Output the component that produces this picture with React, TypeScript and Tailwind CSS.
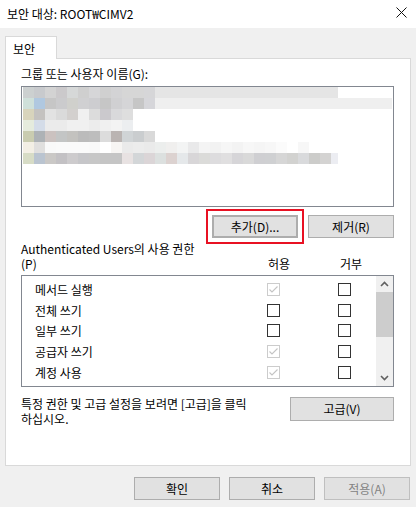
import React from "react";

const rows: { cells: string[]; tail?: string; tailW?: number }[] = [
  {
    cells: ["#ccd0d0", "#c8cacd", "#d3d3d3", "#cbc9cb", "#d6d8d8", "#cfcfcf", "#d6d6d8", "#d0d0d0", "#d3d3d5", "#d6d6d6", "#d6d6d6", "#d6d6d8"],
    tail: "#e5e5e5",
    tailW: 183,
  },
  {
    cells: ["#cfe0da", "#b0c8e0", "#c6c6c6", "#cbcbcd", "#d0d0cc", "#d0d0d2", "#cdcdd0", "#c6c6c6", "#d0d0d2", "#d5d5d7", "#c6c6c6", "#d6d6da"],
    tail: "#efefef",
    tailW: 237,
  },
  {
    cells: ["#d8d4bc", "#c4c2c0", "#e2e2e2", "#dadada", "#d3d0ce", "#f0f0f0", "#dcdcdc", "#cbc9cd", "#d9d9db", "#dedede"],
  },
  {
    cells: ["#e5ebdd", "#d4dce8", "#ebebeb", "#ebebeb", "#f0f0f0", "#f0f0f0", "#ececec", "#f0f0f0", "#f3f3f3", "#eceef0"],
  },
  {
    cells: ["#c9ccb0", "#adb2b6", "#cbc2c0", "#c3c5c5", "#c3c2bf", "#bbbbbb", "#bdbdbd", "#dcdcdc", "#bab4b2", "#d0d4d6", "#cacdcf", "#d9d9d9"],
  },
  {
    cells: ["#f3efe5", "#e0dfde", "#f9f9f9", "#fafafa", "#fafafa", "#fafafa", "#f9f9f9", "#ffffff", "#f7f5f3", "#eaeaea", "#ececec", "#eaeaea", "#eceeed", "#f0efee", "#f3f4f4", "#e9e9ea", "#f4f4f4", "#f2f2f2", "#f6f6f6", "#f3f3f3", "#f7f7f7", "#f5f5f5", "#f7f7f7", "#fbfbfb", "#ffffff", "#f7f7f7"],
  },
  {
    cells: ["#d7dcc6", "#bac4d0", "#cac8c6", "#c3c1c4", "#cdcbcd", "#c6c6c9", "#c7c7c7", "#c5c5c5", "#c5c5c5", "#e8e2e2", "#d3d6d8", "#dbd5d7", "#dce0df", "#dcd2d0", "#e5e8ea", "#d8d6d8", "#dbdbd9", "#dddcde", "#e0dfe0", "#d6d5d8", "#d9d9d9", "#cfcfd2", "#cfd0d2", "#d6d6d6", "#d2d2d0", "#d9dadc", "#ccccca", "#d4d3d2"],
    tail: "#ecedf2",
    tailW: 7,
  },
];

const perms: { name: string; allow: "checked" | "empty" }[] = [
  { name: "메서드 실행", allow: "checked" },
  { name: "전체 쓰기", allow: "empty" },
  { name: "일부 쓰기", allow: "empty" },
  { name: "공급자 쓰기", allow: "checked" },
  { name: "계정 사용", allow: "checked" },
];

function Box({ state }: { state: "checked" | "empty" }) {
  if (state === "checked") {
    return (
      <div className="w-[13px] h-[13px] border border-[#cccccc] bg-white flex items-center justify-center">
        <svg width="11" height="11" viewBox="0 0 11 11">
          <path d="M1.5 5.5 L4 8 L9.5 2.5" fill="none" stroke="#c4c4c4" strokeWidth="1.1" />
        </svg>
      </div>
    );
  }
  return <div className="w-[13px] h-[13px] border border-[#333333] bg-white" />;
}

function Btn({ children, className = "" }: { children: React.ReactNode; className?: string }) {
  return (
    <div
      className={
        "h-[23px] w-[86px] border border-[#adadad] bg-[#e1e1e1] flex items-center justify-center leading-none " +
        className
      }
    >
      {children}
    </div>
  );
}

export default function App() {
  return (
    <div className="w-[416px] h-[507px] bg-[#f0f0f0] font-['Noto_Sans_CJK_KR',sans-serif] text-[12px] text-black flex flex-col overflow-hidden">
      {/* title bar */}
      <div className="h-[28px] bg-white flex items-center justify-between pl-[7px] pr-[9px] shrink-0">
        <span className="leading-[15px] -mt-[2px]">보안 대상: ROOT₩CIMV2</span>
        <svg width="11" height="11" viewBox="0 0 11 11" className="-mt-[4px]">
          <path d="M0.5 0.5 L10.5 10.5 M10.5 0.5 L0.5 10.5" stroke="#111" strokeWidth="1" />
        </svg>
      </div>

      <div className="px-[5px] pt-[8px]">
        <div className="relative z-10 w-[52px] h-[23px] -mb-px border border-b-0 border-[#d9d9d9] bg-white pl-[7px] flex items-center leading-[15px]">
          보안
        </div>
        <div className="h-[408px] border border-[#d9d9d9] bg-white pl-[15px] pt-[7px]">
          <div className="leading-[16px]">그룹 또는 사용자 이름(G):</div>

          {/* users listbox */}
          <div className="mt-[4px] w-[373px] h-[121px] border border-[#828790] bg-white flex flex-col">
            {rows.map((r, i) => (
              <div key={i} className="flex h-[11px] pl-[1px]">
                {r.cells.map((c, j) => (
                  <div key={j} className="w-[11px] h-[11px]" style={{ backgroundColor: c }} />
                ))}
                {r.tail ? <div className="h-[11px]" style={{ backgroundColor: r.tail, width: r.tailW }} /> : null}
              </div>
            ))}
          </div>

          {/* add/remove */}
          <div className="mt-[8px] w-[373px] flex justify-end gap-[10px]">
            <Btn className="border-2 border-[#0078d7] outline-2 outline-[#e81123] outline-offset-[4px]">추가(D)...</Btn>
            <Btn>제거(R)</Btn>
          </div>

          {/* permission header */}
          <div className="mt-[3px] leading-[15px]">
            <div>Authenticated Users의 사용 권한</div>
            <div className="flex">
              <span className="w-[247px]">(P)</span>
              <span className="w-[72px]">허용</span>
              <span>거부</span>
            </div>
          </div>

          {/* permission list */}
          <div className="mt-[4px] w-[373px] h-[112px] border border-[#828790] bg-white flex">
            <div className="flex-1 pt-[3px]">
              {perms.map((p, i) => (
                <div key={i} className="h-[20.7px] flex items-center">
                  <span className="w-[245px] pl-[13px] leading-[15px]">{p.name}</span>
                  <div className="w-[71px]">
                    <Box state={p.allow} />
                  </div>
                  <Box state="empty" />
                </div>
              ))}
            </div>
            <div className="w-[17px] bg-[#f0f0f0] flex flex-col items-center">
              <div className="h-[16px] flex items-center justify-center">
                <svg width="9" height="6" viewBox="0 0 9 6">
                  <path d="M1 5 L4.5 1.5 L8 5" fill="none" stroke="#606060" strokeWidth="1.6" />
                </svg>
              </div>
              <div className="w-full h-[45px] bg-[#cdcdcd]" />
              <div className="flex-1" />
              <div className="h-[16px] flex items-center justify-center">
                <svg width="9" height="6" viewBox="0 0 9 6">
                  <path d="M1 1 L4.5 4.5 L8 1" fill="none" stroke="#606060" strokeWidth="1.6" />
                </svg>
              </div>
            </div>
          </div>

          {/* advanced */}
          <div className="mt-[9px] w-[373px] flex justify-between items-start">
            <div className="leading-[15px]">
              <div>특정 권한 및 고급 설정을 보려면 [고급]을 클릭</div>
              <div>하십시오.</div>
            </div>
            <Btn className="w-[104px] h-[24px] mt-[1px]">고급(V)</Btn>
          </div>
        </div>
      </div>

      {/* dialog buttons */}
      <div className="mt-[11px] flex justify-end gap-[9px] pr-[6px]">
        <Btn>확인</Btn>
        <Btn>취소</Btn>
        <Btn className="bg-[#cccccc] border-[#bfbfbf] text-[#838383]">적용(A)</Btn>
      </div>
    </div>
  );
}
